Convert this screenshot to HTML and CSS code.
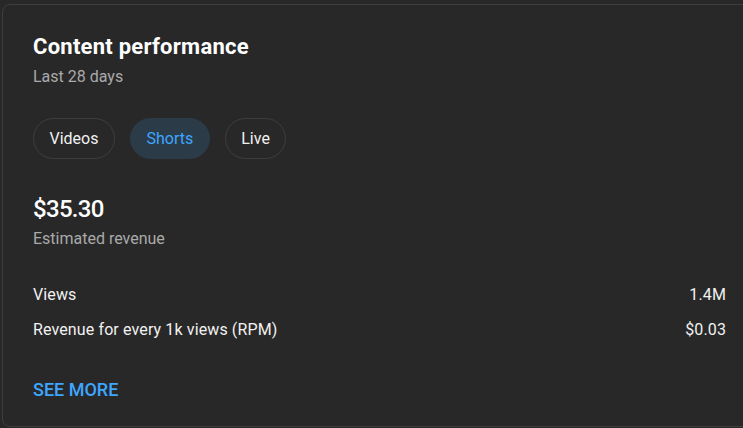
FILE: index.html
```html
<!DOCTYPE html>
<html lang="en">
<head>
  <meta charset="UTF-8"/>
  <meta name="viewport" content="width=device-width,initial-scale=1"/>
  <title>Content performance</title>
  <link rel="stylesheet" href="styles.css">
</head>
<body>

  <section class="card">
    <h2 class="card-title">Content performance</h2>
    <p class="card-sub">Last 28 days</p>

    <div class="chips">
      <button class="chip">Videos</button>
      <button class="chip active">Shorts</button>
      <button class="chip">Live</button>
    </div>

    <div class="total">
      <div class="total-value">$35.30</div>
      <div class="total-label">Estimated revenue</div>
    </div>

    <div class="metrics">
      <div class="metric"><span>Views</span><span>1.4M</span></div>
      <div class="metric"><span>Revenue for every 1k views (RPM)</span><span>$0.03</span></div>
    </div>

    <a class="see-more" href="#">SEE MORE</a>
  </section>

</body>
</html>
```

FILE: styles.css
```css
* {
  box-sizing: border-box;
}
body {
  margin: 0;
  background: #282828;
  color: #f1f1f1;
  font-family: Roboto, 'Noto Sans', sans-serif;
  overflow: hidden;
}

.card {
  margin: 4px 0 0 2px;
  width: 760px;
  height: 423px;
  border: 1px solid #3e3e3e;
  border-radius: 8px;
  background: #282828;
  padding: 27px 30px 0;
}

.card-title {
  margin: 0;
  font-size: 22px;
  line-height: 30px;
  font-weight: 700;
  letter-spacing: 0.25px;
  color: #fff;
}

.card-sub {
  margin: 4px 0 0;
  font-size: 16px;
  line-height: 22px;
  color: #aaa;
}

.chips {
  display: flex;
  gap: 15px;
  margin-top: 30px;
}

.chip {
  height: 41px;
  padding: 0 15.5px;
  border: 1px solid #3e3e3e;
  border-radius: 21px;
  background: transparent;
  color: #f1f1f1;
  font-family: inherit;
  font-size: 16px;
}

.chip.active {
  background: #2b3b48;
  border-color: #2b3b48;
  color: #3ea6ff;
}

.total {
  margin-top: 34px;
}

.total-value {
  font-size: 24px;
  line-height: 32px;
  font-weight: 500;
  letter-spacing: -0.7px;
  color: #fff;
}

.total-label {
  margin-top: 3px;
  font-size: 16px;
  line-height: 22px;
  color: #aaa;
}

.metrics {
  margin-top: 27px;
  width: 693px;
}

.metric {
  display: flex;
  justify-content: space-between;
  font-size: 16px;
  line-height: 35px;
  letter-spacing: 0.12px;
}

.see-more {
  display: block;
  width: max-content;
  margin-top: 31px;
  font-size: 18px;
  line-height: 24px;
  font-weight: 500;
  color: #3ea6ff;
  text-decoration: none;
}
```
